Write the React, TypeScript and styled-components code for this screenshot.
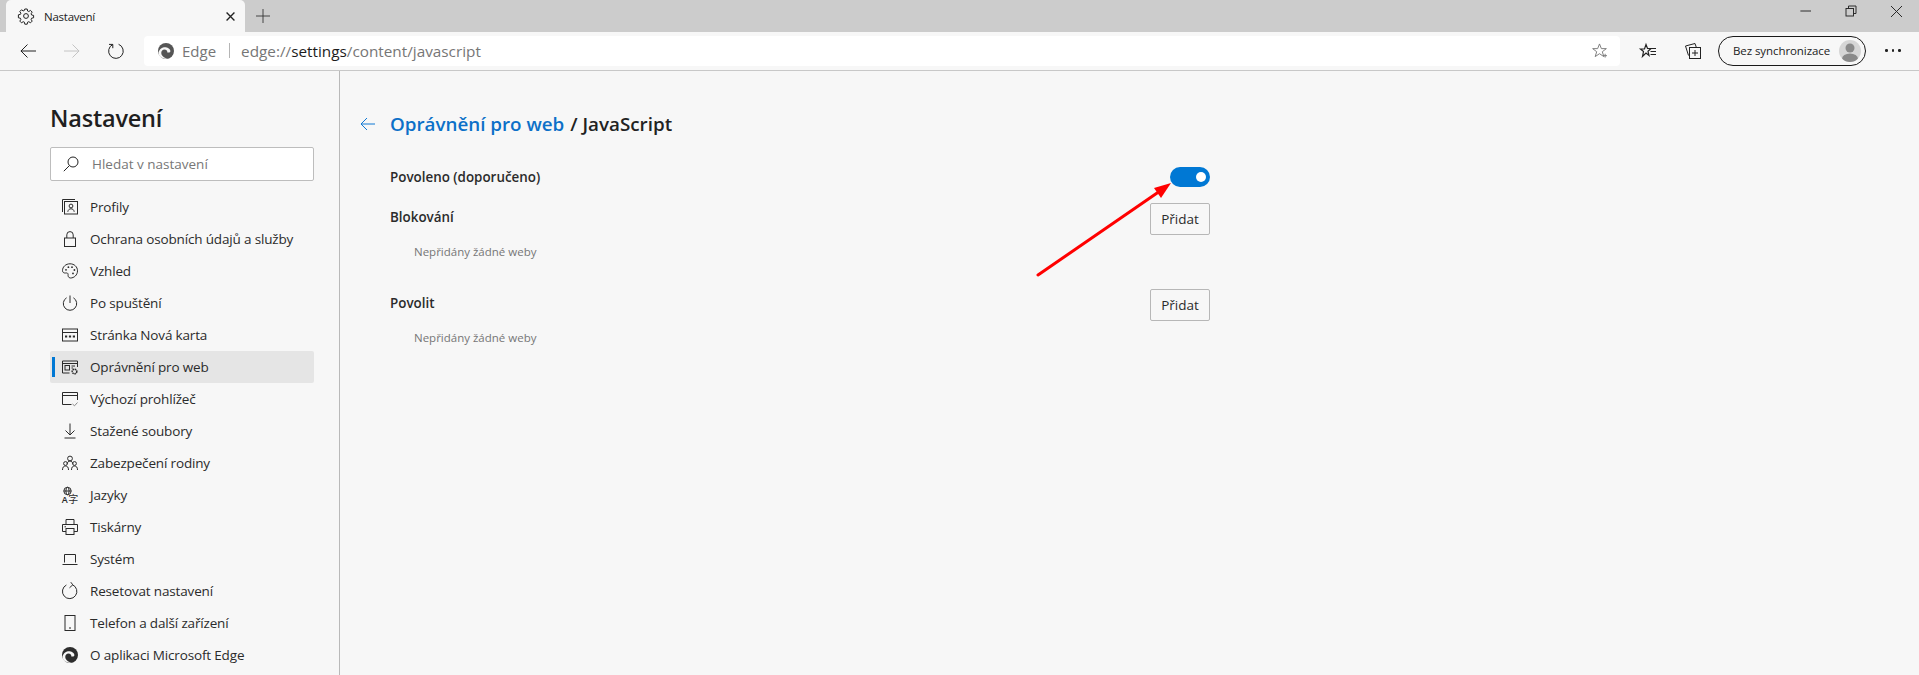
import React from "react";
import styled, { createGlobalStyle } from "styled-components";

const GlobalStyle = createGlobalStyle`
  html, body {
    margin: 0;
    padding: 0;
    background: #f7f7f7;
    overflow: hidden;
  }
  body {
    font-family: "Open Sans", "Noto Sans", "Liberation Sans", sans-serif;
    color: #2b2b2b;
  }
`;

const Root = styled.div`
  position: relative;
  width: 1919px;
  height: 675px;
  overflow: hidden;
  display: flex;
  flex-direction: column;
`;

const TabStrip = styled.div`
  height: 32px;
  flex: none;
  background: #cccccc;
  display: flex;
  align-items: flex-end;
  padding-left: 6px;
`;

const Tab = styled.div`
  width: 239px;
  height: 32px;
  box-sizing: border-box;
  background: #f7f7f7;
  border-radius: 5px 5px 0 0;
  display: flex;
  align-items: center;
  padding: 0 10px 0 12px;
  color: #222;
`;

const TabTitle = styled.span`
  flex: 1;
  margin-left: 10px;
  font-size: 11.5px;
  letter-spacing: -0.25px;
`;

const NewTab = styled.div`
  width: 14px;
  height: 32px;
  display: flex;
  align-items: center;
  margin-left: 11px;
  color: #333;
`;

const WindowControls = styled.div`
  margin-left: auto;
  height: 32px;
  display: flex;
  align-items: center;
  gap: 35px;
  padding-right: 17px;
  padding-bottom: 10px;
  box-sizing: border-box;
  color: #222;
`;

const Toolbar = styled.div`
  height: 39px;
  flex: none;
  box-sizing: border-box;
  background: #f7f7f7;
  border-bottom: 1px solid #c8c8c8;
  display: flex;
  align-items: center;
  padding: 0 0 1px 20px;
  color: #222;
`;

const NavButton = styled.div<{ $muted?: boolean }>`
  width: 16px;
  height: 16px;
  display: flex;
  align-items: center;
  justify-content: center;
  flex: none;
  margin-right: 28px;
  color: ${({ $muted }) => ($muted ? "#c4c4c4" : "inherit")};
`;

const AddressBar = styled.div`
  width: 1476px;
  height: 30px;
  flex: none;
  box-sizing: border-box;
  margin-left: -8px;
  background: #fff;
  border-radius: 4px;
  display: flex;
  align-items: center;
  padding: 0 13px 0 14px;
`;

const EdgeLabel = styled.span`
  margin-left: 8px;
  color: #767676;
  font-size: 15px;
`;

const AddressDivider = styled.span`
  width: 1px;
  height: 15px;
  margin: 0 11px 0 13px;
  background: #b5b5b5;
`;

const Url = styled.span`
  flex: 1;
  color: #767676;
  font-size: 15.3px;
  b {
    font-weight: 400;
    color: #1c1c1c;
  }
`;

const ToolIcons = styled.div`
  display: flex;
  align-items: center;
  margin-left: 20px;
  gap: 29px;
`;

const SyncPill = styled.div`
  width: 148px;
  height: 30px;
  box-sizing: border-box;
  flex: none;
  margin-left: 17px;
  border: 1px solid #1a1a1a;
  border-radius: 15px;
  display: flex;
  align-items: center;
  justify-content: space-between;
  padding: 0 4px 0 14px;
  font-size: 11.5px;
  letter-spacing: -0.08px;
  color: #222;
  background: #f7f7f7;
`;

const Avatar = styled.div`
  width: 22px;
  height: 22px;
  border-radius: 50%;
  background: #d6d6d6;
  overflow: hidden;
  flex: none;
`;

const MoreDots = styled.div`
  margin-left: 19px;
  display: flex;
  gap: 4px;
  span {
    width: 2.5px;
    height: 2.5px;
    border-radius: 50%;
    background: #222;
  }
`;

const Main = styled.div`
  flex: 1;
  display: flex;
  min-height: 0;
`;

const Sidebar = styled.nav`
  width: 340px;
  flex: none;
  box-sizing: border-box;
  border-right: 1px solid #b9b9b9;
  padding: 30px 25px 0 50px;
`;

const SidebarTitle = styled.h1`
  margin: 0 0 12px;
  font-size: 23.5px;
  line-height: 34px;
  font-weight: 600;
  letter-spacing: -0.2px;
  color: #1f1f1f;
`;

const SearchBox = styled.div`
  height: 34px;
  box-sizing: border-box;
  background: #fff;
  border: 1px solid #bdbdbd;
  border-radius: 2px;
  display: flex;
  align-items: center;
  padding-left: 12px;
  margin-bottom: 10px;
  color: #222;
`;

const SearchText = styled.span`
  margin-left: 13px;
  font-size: 13.5px;
  color: #777;
`;

const NavItem = styled.div<{ $active?: boolean }>`
  position: relative;
  height: 32px;
  display: flex;
  align-items: center;
  padding-left: 12px;
  border-radius: 2px;
  font-size: 13.5px;
  letter-spacing: -0.16px;
  color: #2b2b2b;
  background: ${({ $active }) => ($active ? "#e5e5e5" : "transparent")};
  ${({ $active }) =>
    $active &&
    `&::before {
      content: "";
      position: absolute;
      left: 2px;
      top: 6px;
      width: 3px;
      height: 20px;
      background: #0078d4;
    }`}
`;

const NavLabel = styled.span`
  margin-left: 12px;
`;

const Content = styled.main`
  flex: 1;
  padding: 35px 0 0 20px;
`;

const Heading = styled.div`
  height: 36px;
  display: flex;
  align-items: center;
  font-size: 18.8px;
  font-weight: 600;
  color: #222;
  margin-bottom: 9px;
`;

const BackLink = styled.span`
  width: 15px;
  height: 16px;
  display: flex;
  margin-right: 15px;
  color: #0f78d4;
`;

const HeadingLink = styled.span`
  color: #0c70c8;
  margin-right: 6px;
`;

const Section = styled.div`
  width: 820px;
  margin-left: 30px;
`;

const ToggleRow = styled.div`
  height: 52px;
  display: flex;
  align-items: center;
  justify-content: space-between;
  font-size: 13.4px;
  font-weight: 600;
`;

const Toggle = styled.div`
  width: 40px;
  height: 20px;
  border-radius: 10px;
  background: #0078d4;
  display: flex;
  align-items: center;
  justify-content: flex-end;
  padding-right: 4px;
  box-sizing: border-box;
  &::after {
    content: "";
    width: 10px;
    height: 10px;
    border-radius: 50%;
    background: #fff;
  }
`;

const ListBlock = styled.section`
  height: 86px;
`;

const ListHead = styled.div`
  height: 32px;
  display: flex;
  justify-content: space-between;
  font-size: 13.4px;
  font-weight: 600;
  line-height: 28px;
`;

const AddButton = styled.button`
  width: 60px;
  height: 32px;
  box-sizing: border-box;
  background: #f7f7f7;
  border: 1px solid #b7b7b7;
  border-radius: 2px;
  font-family: inherit;
  font-size: 13.5px;
  color: #2b2b2b;
  padding: 0;
`;

const EmptyNote = styled.div`
  margin: 9px 0 0 24px;
  font-size: 11.5px;
  line-height: 16px;
  color: #767676;
`;

const ArrowOverlay = styled.svg`
  position: absolute;
  left: 1030px;
  top: 175px;
  width: 150px;
  height: 110px;
  pointer-events: none;
`;

const Glyph = styled.svg<{ $size?: number }>`
  width: ${({ $size }) => $size ?? 16}px;
  height: ${({ $size }) => $size ?? 16}px;
  flex: none;
  display: block;
  fill: none;
  stroke: currentColor;
  stroke-width: 1;
  overflow: visible;
`;

const Ico: React.FC<{ size?: number; children: React.ReactNode }> = ({ size, children }) => (
  <Glyph $size={size} viewBox="0 0 16 16">
    {children}
  </Glyph>
);

const EdgeLogo: React.FC<{ color?: string }> = ({ color = "#2e2e2e" }) => (
  <svg width={16} height={16} viewBox="0 0 16 16" style={{ flex: "none" }}>
    <circle cx="8" cy="8" r="8" fill={color} />
    <path
      d="M.6 9.4C1.400 5.600 5 3.800 7.800 4.200c2.600.4 4.600 2 4.600 3.900 0 1-.8 1.500-1.900 1.500-.8 0-1.300-.2-1.300-.2.400-1.600-.8-3-2.700-3-2 0-3.400 1.700-3.200 3.800.2 2.400 2.600 4.800 6 5.200-4.800 1.200-9.300-2-8.700-6z"
      fill="#f7f7f7"
    />
    <path d="M9 9.600c.6 1.400 2.600 1.600 4.400 1 1-.4 1.600-.2 1.400.4-1 2.200-3.200 3.600-5.600 3.400-2.600-.6-3.600-3-2.600-4.600z" fill={color} />
  </svg>
);

const Gear = () => (
  <Ico>
    <circle cx="8" cy="8" r="2.400" />
    <path d="M6.800 1h2.400l.4 2 1.200.5 1.700-1.100 1.700 1.700-1.100 1.700.5 1.200 2 .4v2.400l-2 .4-.5 1.200 1.100 1.700-1.700 1.700-1.700-1.100-1.200.5-.4 2H6.800l-.4-2-1.200-.5-1.700 1.100-1.700-1.700 1.100-1.700-.5-1.200-2-.4V6.800l2-.4.5-1.200-1.100-1.700 1.700-1.700 1.700 1.100 1.200-.5z" />
  </Ico>
);

const navIcons: Record<string, React.ReactNode> = {
  profile: (
    <Ico>
      <path d="M.5 13V.5h12.500" />
      <rect x="2.500" y="2.500" width="13" height="12.500" />
      <circle cx="9" cy="7" r="1.900" />
      <path d="M5.800 12.800c.3-2 1.500-3 3.200-3s2.900 1 3.200 3" />
    </Ico>
  ),
  lock: (
    <Ico>
      <rect x="2.500" y="7" width="11" height="8.500" />
      <path d="M4.800 7V3.800a3.200 3.200 0 0 1 6.400 0V7" />
    </Ico>
  ),
  palette: (
    <Ico>
      <path d="M8 .8C3.800.8.5 3.800.5 7.600c0 1.800 1.400 2.600 3 2.400 1.600-.2 2.800.2 2.600 1.600-.2 1.200.2 3.400 2.400 3.400 3.600 0 7-3 7-7.200C15.500 3.800 12.200.8 8 .8z" />
      <circle cx="4" cy="6.800" r=".9" fill="currentColor" stroke="none" />
      <circle cx="6.400" cy="4.200" r=".9" fill="currentColor" stroke="none" />
      <circle cx="10" cy="4.200" r=".9" fill="currentColor" stroke="none" />
      <circle cx="12.400" cy="7" r=".9" fill="currentColor" stroke="none" />
      <circle cx="11" cy="10.400" r=".9" fill="currentColor" stroke="none" />
    </Ico>
  ),
  power: (
    <Ico>
      <path d="M8 .5V8" />
      <path d="M4.600 2.800a6.700 6.700 0 1 0 6.800 0" />
    </Ico>
  ),
  newtab: (
    <Ico>
      <rect x=".5" y="2" width="15" height="12" />
      <path d="M.5 5.500h15" />
      <path d="M3 9.500h2.200M6.900 9.500h2.200M10.800 9.500H13" strokeWidth="2" />
    </Ico>
  ),
  permissions: (
    <Ico>
      <path d="M15.500 8V2H.5v12h7" />
      <path d="M.5 4.500h15" />
      <rect x="3" y="6.500" width="4.500" height="4.500" />
      <path d="M9.500 7h3.500M9.500 9h1.500" />
      <circle cx="12.500" cy="12.500" r="2.300" strokeWidth="1.500" strokeDasharray="1.400 .6" />
    </Ico>
  ),
  browser: (
    <Ico>
      <path d="M15.500 9V1.500H.5v12h9" />
      <path d="M.5 4.500h15" />
      <path d="M10.500 13l2 1.800 3-3.300" stroke="#8a8a8a" />
    </Ico>
  ),
  download: (
    <Ico>
      <path d="M8 .5V12M3.500 7.500L8 12l4.500-4.500M2.500 15h11" />
    </Ico>
  ),
  family: (
    <Ico>
      <circle cx="8" cy="3.500" r="2.400" />
      <circle cx="3.500" cy="8.500" r="1.900" />
      <circle cx="12.500" cy="8.500" r="1.900" />
      <path d="M.5 15c0-2.600 1-4 3-4s3 1.400 3 4M9.500 15c0-2.600 1-4 3-4s3 1.400 3 4M5 9c.4-1.800 1.600-3 3-3s2.600 1.200 3 3" />
    </Ico>
  ),
  languages: (
    <Ico>
      <circle cx="5.500" cy="4" r="3.700" />
      <ellipse cx="5.500" cy="4" rx="1.600" ry="3.700" />
      <path d="M1.800 4h7.400" />
      <text x="-.3" y="15.800" fontSize="9" fontWeight="600" fill="currentColor" stroke="none" fontFamily="Open Sans, sans-serif">A</text>
      <text x="6.200" y="16" fontSize="10" fill="currentColor" stroke="none" fontFamily="Noto Sans CJK SC, sans-serif">字</text>
    </Ico>
  ),
  printer: (
    <Ico>
      <path d="M4 5.500V.5h8v5" />
      <path d="M4 12.500H.5v-7h15v7H12" />
      <rect x="4" y="9.500" width="8" height="6" />
      <path d="M2.500 7.800h1.500" />
    </Ico>
  ),
  laptop: (
    <Ico>
      <path d="M2.500 11.500v-8h11v8" />
      <path d="M.5 13.500h15" />
    </Ico>
  ),
  reset: (
    <Ico>
      <path d="M10.500 1.800A7.200 7.200 0 1 1 4.400 2" />
      <path d="M7.500 4.800L10.800 1.800 8.800-.8" />
    </Ico>
  ),
  phone: (
    <Ico>
      <rect x="3" y=".5" width="10" height="15" />
      <path d="M7.300 13h1.400" strokeWidth="1.400" />
    </Ico>
  ),
  edge: <EdgeLogo />,
};

const navItems = [
  { key: "profile", label: "Profily" },
  { key: "lock", label: "Ochrana osobních údajů a služby" },
  { key: "palette", label: "Vzhled" },
  { key: "power", label: "Po spuštění" },
  { key: "newtab", label: "Stránka Nová karta" },
  { key: "permissions", label: "Oprávnění pro web", active: true },
  { key: "browser", label: "Výchozí prohlížeč" },
  { key: "download", label: "Stažené soubory" },
  { key: "family", label: "Zabezpečení rodiny" },
  { key: "languages", label: "Jazyky" },
  { key: "printer", label: "Tiskárny" },
  { key: "laptop", label: "Systém" },
  { key: "reset", label: "Resetovat nastavení" },
  { key: "phone", label: "Telefon a další zařízení" },
  { key: "edge", label: "O aplikaci Microsoft Edge" },
];

const App: React.FC = () => (
  <Root>
    <GlobalStyle />
    <TabStrip>
      <Tab>
        <Gear />
        <TabTitle>Nastavení</TabTitle>
        <Ico size={9}>
          <path d="M1 1l14 14M15 1L1 15" strokeWidth="2.400" />
        </Ico>
      </Tab>
      <NewTab>
        <Ico size={14}>
          <path d="M8 0v16M0 8h16" />
        </Ico>
      </NewTab>
      <WindowControls>
        <Ico size={10}>
          <path d="M-1 8h17" strokeWidth="1.500" />
        </Ico>
        <Ico size={10}>
          <rect x="0" y="4" width="12" height="12" strokeWidth="1.500" />
          <path d="M4 4V0h12v12h-4" strokeWidth="1.500" />
        </Ico>
        <Ico size={11}>
          <path d="M0 0l16 16M16 0L0 16" strokeWidth="1.400" />
        </Ico>
      </WindowControls>
    </TabStrip>
    <Toolbar>
      <NavButton>
        <Ico>
          <path d="M16 8H.8M7.500 1.500L1 8l6.500 6.500" />
        </Ico>
      </NavButton>
      <NavButton $muted>
        <Ico>
          <path d="M0 8h15.200M8.500 1.500L15 8l-6.500 6.500" />
        </Ico>
      </NavButton>
      <NavButton>
        <Ico>
          <path d="M10.600 1.300A7.300 7.300 0 1 1 4.800 1.500" />
          <path d="M4.800 5.200V1.400H1" />
        </Ico>
      </NavButton>
      <AddressBar>
        <EdgeLogo color="#555" />
        <EdgeLabel>Edge</EdgeLabel>
        <AddressDivider />
        <Url>
          edge://<b>settings</b>/content/javascript
        </Url>
        <Ico size={15}>
          <path d="M8 1l2 5h5.300l-4.300 3.300 1.600 5.200L8 11.400l-4.600 3.100L5 9.300.7 6H6z" stroke="#777" />
          <path d="M12 13.500h4M14 11.500v4" stroke="#777" />
        </Ico>
      </AddressBar>
      <ToolIcons>
        <Ico>
          <path d="M6 1.500l1.500 4h3.500l-3 2.800 1 4.200L6 10l-3.500 3.500 1-5-3-2.500h4z" strokeWidth="1.200" />
          <path d="M10 5.500h6M10.500 8.500H16M10.500 11.500H16" />
        </Ico>
        <Ico>
          <path d="M3.500 12.500L.5 3 10 .5l1.200 3.500" />
          <rect x="4.500" y="4.500" width="11" height="11" />
          <path d="M10 7v6M7 10h6" />
        </Ico>
      </ToolIcons>
      <SyncPill>
        Bez synchronizace
        <Avatar>
          <svg width="22" height="22" viewBox="0 0 22 22">
            <circle cx="11" cy="8" r="4.500" fill="#8a8a8a" />
            <ellipse cx="11" cy="19" rx="8" ry="5.500" fill="#8a8a8a" />
          </svg>
        </Avatar>
      </SyncPill>
      <MoreDots>
        <span />
        <span />
        <span />
      </MoreDots>
    </Toolbar>
    <Main>
      <Sidebar>
        <SidebarTitle>Nastavení</SidebarTitle>
        <SearchBox>
          <Ico>
            <circle cx="10" cy="6" r="5" />
            <path d="M6.400 9.600L.8 15.200" />
          </Ico>
          <SearchText>Hledat v nastavení</SearchText>
        </SearchBox>
        {navItems.map((item) => (
          <NavItem key={item.key} $active={item.active}>
            {navIcons[item.key]}
            <NavLabel>{item.label}</NavLabel>
          </NavItem>
        ))}
      </Sidebar>
      <Content>
        <Heading>
          <BackLink>
            <Ico>
              <path d="M15 8H1M7 2L1 8l6 6" />
            </Ico>
          </BackLink>
          <HeadingLink>Oprávnění pro web</HeadingLink>/ JavaScript
        </Heading>
        <Section>
          <ToggleRow>
            Povoleno (doporučeno)
            <Toggle />
          </ToggleRow>
          <ListBlock>
            <ListHead>
              Blokování
              <AddButton>Přidat</AddButton>
            </ListHead>
            <EmptyNote>Nepřidány žádné weby</EmptyNote>
          </ListBlock>
          <ListBlock>
            <ListHead>
              Povolit
              <AddButton>Přidat</AddButton>
            </ListHead>
            <EmptyNote>Nepřidány žádné weby</EmptyNote>
          </ListBlock>
        </Section>
      </Content>
    </Main>
    <ArrowOverlay viewBox="0 0 150 110">
      <path d="M8 100L130 16" stroke="#ff0000" strokeWidth="3" strokeLinecap="round" />
      <path d="M141 8L124 13 131 23z" fill="#ff0000" />
    </ArrowOverlay>
  </Root>
);

export default App;
